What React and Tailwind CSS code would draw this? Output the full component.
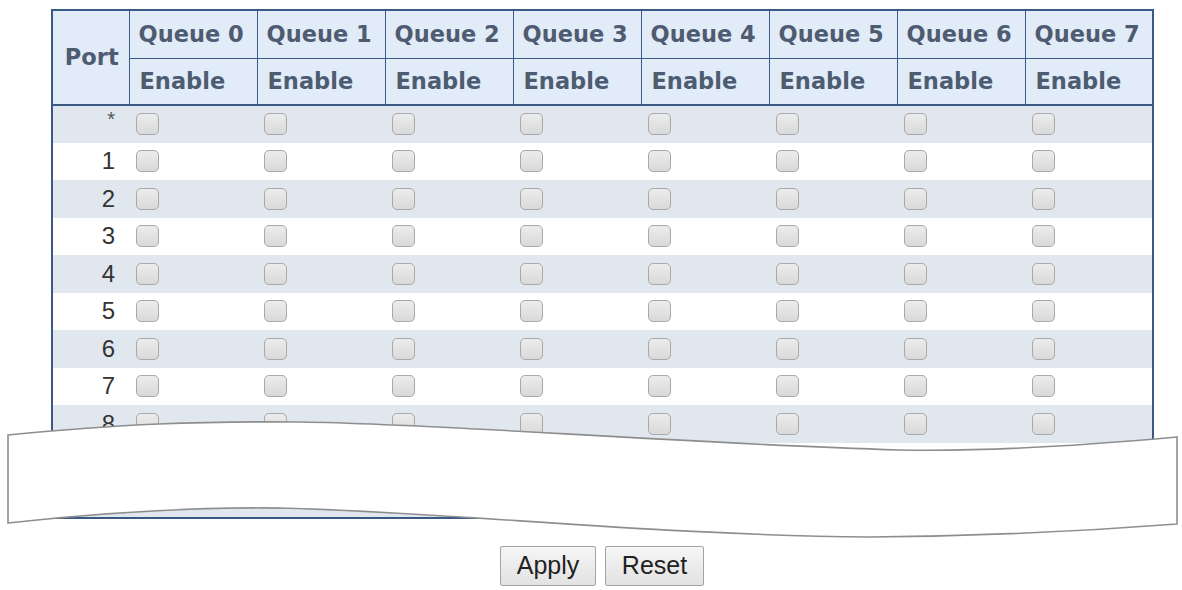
import React from "react";

const queues = [0, 1, 2, 3, 4, 5, 6, 7];
const ports = ["*", "1", "2", "3", "4", "5", "6", "7", "8", "9", "10"];

function Box() {
  return (
    <span className="block w-[23px] h-[22px] rounded-[5px] border-[1.5px] border-[#a9a9a9] bg-gradient-to-b from-[#ececec] to-[#d9d9d9]" />
  );
}

export default function App() {
  return (
    <div className="relative w-[1182px] h-[590px] bg-white overflow-hidden">
      <div className="pt-[9px] pl-[51px]">
        <table className="border-collapse table-fixed w-[1100px] border-2 border-[#3a5a83]">
          <colgroup>
            <col className="w-[77px]" />
            {queues.map((q) => (
              <col key={q} className="w-[128px]" />
            ))}
          </colgroup>
          <thead className="bg-[#e2ecf8] text-[#4e5c72] font-bold text-[22.5px] leading-none [font-family:'DejaVu_Sans',sans-serif]">
            <tr className="h-[48px]">
              <th rowSpan={2} className="border-[1.5px] border-[#3a5a83] border-b-2 text-center font-bold pl-[2px]">
                Port
              </th>
              {queues.map((q) => (
                <th key={q} className="border-[1.5px] border-[#3a5a83] text-left pl-[9px] font-bold whitespace-nowrap">
                  Queue {q}
                </th>
              ))}
            </tr>
            <tr className="h-[47px]">
              {queues.map((q) => (
                <th key={q} className="border-[1.5px] border-[#3a5a83] border-b-2 text-left pl-[10px] font-bold">
                  Enable
                </th>
              ))}
            </tr>
          </thead>
          <tbody className="[font-family:'Liberation_Sans',Arial,sans-serif] text-[24px] text-[#333]">
            {ports.map((p, i) => (
              <tr key={p} className={`h-[37.5px] ${i % 2 === 0 ? "bg-[#e0e7ef]" : "bg-white"}`}>
                <td className="text-right pr-[14px] leading-none p-0">
                  {p === "*" ? (
                    <span className="relative top-[-6px] text-[20px] text-[#555]">*</span>
                  ) : (
                    p
                  )}
                </td>
                {queues.map((q) => (
                  <td key={q} className="pl-[7px] p-0">
                    <Box />
                  </td>
                ))}
              </tr>
            ))}
          </tbody>
        </table>
      </div>

      <svg
        className="absolute left-0 top-0 pointer-events-none"
        width="1182"
        height="590"
        viewBox="0 0 1182 590"
      >
        <path
          d="M8 435 C 120 424, 200 421, 300 422 C 450 424, 650 442, 900 450 C 1000 452, 1100 444, 1177 437 L 1177 524 C 1100 530, 1000 536, 870 537 C 650 535, 450 512, 280 508 C 180 507, 80 515, 8 523 Z"
          fill="#ffffff"
          stroke="#8e8e8e"
          strokeWidth="1.6"
        />
      </svg>

      <div className="absolute left-0 top-[546px] w-full flex justify-center gap-[9px] pl-[22px] [font-family:'Liberation_Sans',Arial,sans-serif]">
        <button className="w-[96px] h-[40px] text-[25px] text-[#222] border-[1.5px] border-[#a3a3a3] rounded-[2px] bg-gradient-to-b from-[#f6f6f6] to-[#e2e2e2]">
          Apply
        </button>
        <button className="w-[99px] h-[40px] text-[25px] text-[#222] border-[1.5px] border-[#a3a3a3] rounded-[2px] bg-gradient-to-b from-[#f6f6f6] to-[#e2e2e2]">
          Reset
        </button>
      </div>
    </div>
  );
}
